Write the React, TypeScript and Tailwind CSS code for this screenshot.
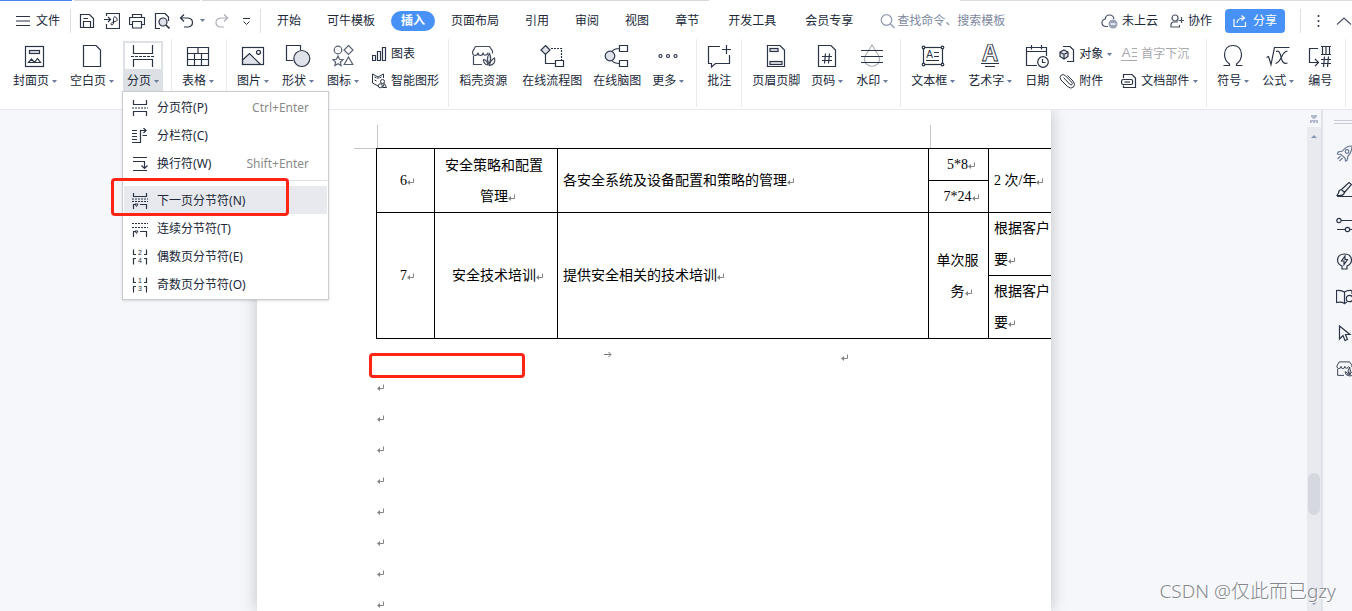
import type { ReactNode } from "react"

const INK = "#2b3346"
const SOFT = "#dfe2e8"

/* ---------- small helpers ---------- */

function Svg({ w = 26, h = 24, color = INK, children }: { w?: number; h?: number; color?: string; children: ReactNode }) {
  return (
    <svg width={w} height={h} viewBox={`0 0 ${w} ${h}`} fill="none" stroke={color} strokeWidth="1.2" className="block shrink-0" aria-hidden="true">
      {children}
    </svg>
  )
}

function Glyph({ x, y, size, color = INK, children }: { x: number; y: number; size: number; color?: string; children: string }) {
  return (
    <text x={x} y={y} fontSize={size} fill={color} stroke="none" textAnchor="middle" className="font-['Liberation_Sans']">
      {children}
    </text>
  )
}

function Caret() {
  return (
    <svg width="5" height="3" viewBox="0 0 5 3" className="block shrink-0" aria-hidden="true">
      <path d="M0 0H5L2.5 3Z" fill="#6b7a9b" />
    </svg>
  )
}

// paragraph mark shown after every editable run
function Mark() {
  return (
    <svg width="8" height="8" viewBox="0 0 8 8" fill="none" stroke="#858585" className="-mr-2 inline-block align-[-1px]" aria-hidden="true">
      <path d="M6.5 0.5V4.5H2" />
      <path d="M0 4.5L3 2V7Z" fill="#858585" stroke="none" />
    </svg>
  )
}

function Docer() {
  return (
    <>
      <path d="M5.5 2.5H19.5L22.5 7V9.5M5.5 2.5L2.5 8Q2.5 11.5 5 11.5Q8 11.5 8 8.5Q8 11.5 10.5 11.5Q13 11.5 13 8.5Q13.5 11.5 15.5 11Q18 10.5 18 8.5M3.5 12V20.5H12" />
      <path d="M18 21Q13.5 20.5 13.5 15.5Q17 16 18 21Z" />
      <path d="M19 20Q15.5 14.5 19.5 9.5Q22 14.5 19 20Z" fill={SOFT} />
      <path d="M19.5 21.5Q20 16.5 24.5 14Q26 20.5 19.5 21.5Z" />
    </>
  )
}

/* ---------- ribbon ---------- */

function Tool({ icon, label, caret, active, className = "" }: { icon: ReactNode; label: string; caret?: boolean; active?: boolean; className?: string }) {
  return (
    <button
      type="button"
      className={`flex shrink-0 flex-col items-center border-2 px-0.5 pt-px whitespace-nowrap ${active ? "border-[#dde1e6] bg-linear-to-b from-white from-[26px] to-[#dde1e6] to-[26px] pb-1" : "border-transparent"} ${className}`}
    >
      {icon}
      <span className="mt-[5px] flex items-center gap-[3px] leading-4">
        {label}
        {caret && <Caret />}
      </span>
    </button>
  )
}

function SmallTool({ icon, label, caret, muted }: { icon: ReactNode; label: string; caret?: boolean; muted?: boolean }) {
  return (
    <button type="button" disabled={muted} className={`flex shrink-0 items-center gap-1 leading-4 whitespace-nowrap ${muted ? "text-[#a9a9ad]" : ""}`}>
      {icon}
      {label}
      {caret && <Caret />}
    </button>
  )
}

function Group({ children, className = "pr-2" }: { children: ReactNode; className?: string }) {
  return <div className={`flex shrink-0 items-start gap-[5px] border-r border-[#eaebee] pt-0.5 pl-1.5 ${className}`}>{children}</div>
}

function Column({ children }: { children: ReactNode }) {
  return <div className="flex flex-col gap-[11px] pt-[5px] pl-1">{children}</div>
}

const pageShape = "M4.5 1.5H17L21.5 6V22.5H4.5Z"

function Ribbon() {
  return (
    <div className="flex h-[68px] items-stretch">
      <Group className="pr-2 pl-[9px]">
        <Tool caret label="封面页" icon={
          <Svg>
            <rect x="3.5" y="2.5" width="18" height="20" />
            <rect x="7.5" y="6.5" width="10" height="3" fill={SOFT} />
            <path d="M6.5 18.5L9.5 15L12.5 18.5ZM12.5 18.5L15.5 14.5L18.5 18.5Z" />
          </Svg>
        } />
        <Tool caret label="空白页" icon={<Svg><path d={pageShape} /></Svg>} />
        <div className="relative">
          <Tool active caret label="分页" icon={
            <Svg>
              <path d="M3.5 1V9.5H22.5V1M3.5 23V15.5H22.5V23" />
              <path d="M1 12.5H25" strokeDasharray="3 1" />
            </Svg>
          } />
          <BreakMenu />
        </div>
      </Group>

      <Group>
        <Tool caret label="表格" icon={
          <Svg><path d="M2.5 3.5H23.5V21.5H2.5ZM2.5 9.5H23.5M2.5 15.5H23.5M13 3.5V9.5M9.5 9.5V21.5M16.5 9.5V21.5" /></Svg>
        } />
      </Group>

      <Group className="pr-0">
        <Tool caret label="图片" icon={
          <Svg>
            <path d="M2.5 16L9.5 9.5L20.5 20.5H2.5Z" fill={SOFT} />
            <rect x="2.5" y="3.5" width="21" height="17" />
            <circle cx="18.5" cy="8.3" r="2" />
          </Svg>
        } />
        <Tool caret label="形状" icon={
          <Svg>
            <path d="M15.5 6V1.5H1.5V16.5H8" />
            <circle cx="16.8" cy="14.5" r="8" fill={SOFT} />
          </Svg>
        } />
        <Tool caret label="图标" icon={
          <Svg color="#596173">
            <circle cx="8" cy="6" r="3.8" />
            <path d="M18.5 1.5L23 6L18.5 10.5L14 6Z" />
            <path d="M8 12L9.5 15.3L13 15.7L10.4 18L11.1 21.5L8 19.7L4.9 21.5L5.6 18L3 15.7L6.5 15.3Z" />
            <path d="M18.5 13L22.8 20.5H14.2Z" />
          </Svg>
        } />
        <Column>
          <SmallTool label="图表" icon={
            <Svg w={15} h={16}>
              <path d="M0.5 9.5H3.5V14.5H0.5ZM5.5 5.5H8.5V14.5H5.5ZM10.5 1.5H13.5V14.5H10.5Z" />
            </Svg>
          } />
          <SmallTool label="智能图形" icon={
            <Svg w={15} h={16}>
              <path d="M6 13L0.5 10V1L6 4L11.5 1V5M2.5 4L4.5 5M2.5 7L4.5 8M7.5 5L9.5 4M6 4V6" strokeWidth="1" />
              <g strokeWidth="1" fill="#fff">
                <circle cx="10.5" cy="8.5" r="2" />
                <circle cx="8.3" cy="12.8" r="2" />
                <path d="M12.3 10.5L14.5 14.5H10.5Z" />
              </g>
            </Svg>
          } />
        </Column>
        <span className="w-1" />
      </Group>

      <Group>
        <Tool label="稻壳资源" className="mr-0.5" icon={<Svg color="#434b5c"><Docer /></Svg>} />
        <Tool label="在线流程图" className="-mr-0.5" icon={
          <Svg>
            <path d="M6.5 1.5L11 6L6.5 10.5L2 6Z" fill={SOFT} />
            <path d="M12 4.5H22.5V16" strokeDasharray="2 1" />
            <path d="M6.5 10.5V19.5H16.5M16.5 16.5H24.5V22.5H16.5Z" />
          </Svg>
        } />
        <Tool label="在线脑图" className="-mr-0.5" icon={
          <Svg>
            <circle cx="6" cy="12" r="4.8" fill={SOFT} />
            <path d="M8 7.5Q10 4.5 15.5 4.5M8 16.5Q10 19.5 15.5 19.5M15.5 1.5H23.5V7.5H15.5ZM15.5 16.5H23.5V22.5H15.5Z" />
          </Svg>
        } />
        <Tool caret label="更多" icon={
          <Svg>
            <circle cx="5.5" cy="12" r="1.5" />
            <circle cx="13" cy="12" r="1.5" />
            <circle cx="20.5" cy="12" r="1.5" />
          </Svg>
        } />
      </Group>

      <Group className="pr-1.5">
        <Tool label="批注" className="-mx-px" icon={<Svg><path d="M14 2.5H2.5V19.5H5.5V23L9.5 19.5H23.5V11M20.5 1V10M16 5.5H25" /></Svg>} />
      </Group>

      <Group>
        <Tool label="页眉页脚" className="-mr-0.5" icon={
          <Svg>
            <path d={pageShape} />
            <rect x="7" y="4.5" width="8" height="3" fill={SOFT} />
            <rect x="7" y="17.5" width="12" height="3" fill={SOFT} />
          </Svg>
        } />
        <Tool caret label="页码" icon={
          <Svg>
            <path d={pageShape} />
            <path d="M8 12.5H18M8 16.5H18M11.5 9.5L10.5 19.5M15.5 9.5L14.5 19.5" />
          </Svg>
        } />
        <Tool caret label="水印" icon={
          <Svg>
            <path d="M13 1L7 10.5Q3.5 17 8 20.5Q13 24 18 20.5Q22.5 17 19 10.5Z" stroke="#adb0b8" />
            <path d="M2 6.5H24M2 12.5H24M2 18.5H24" />
          </Svg>
        } />
      </Group>

      <Group>
        <Tool caret label="文本框" icon={
          <Svg>
            <rect x="3.5" y="3.5" width="19" height="17" />
            <g fill="#fff">
              <circle cx="3.5" cy="3.5" r="1.3" />
              <circle cx="22.5" cy="3.5" r="1.3" />
              <circle cx="3.5" cy="20.5" r="1.3" />
              <circle cx="22.5" cy="20.5" r="1.3" />
            </g>
            <Glyph x={9.5} y={14} size={10}>A</Glyph>
            <path d="M14 8.5H19M14 12.5H19M6 16.5H19" />
          </Svg>
        } />
        <Tool caret label="艺术字" icon={
          <Svg>
            <text x="13" y="17" fontSize="23" textAnchor="middle" strokeWidth="0.9" className="font-['Liberation_Sans'] font-bold">A</text>
            <path d="M4 19.5H22M8 22.5H18" />
          </Svg>
        } />
        <Tool label="日期" className="-mr-1 -ml-px" icon={
          <Svg>
            <path d="M13 21.5H2.5V3.5H22.5V12M2.5 7.5H22.5M7.5 1V5.5M17.5 1V5.5" />
            <circle cx="19" cy="18" r="5.3" />
            <path d="M18.5 15V18.5H21.5" />
          </Svg>
        } />
        <Column>
          <SmallTool caret label="对象" icon={
            <Svg w={16} h={16}>
              <path d="M4 0.5H11L14.5 4V15.5H8" />
              <path d="M5 4L9 6V10.5L5 13L1 10.5V6ZM1.5 6.5L5 8.3L8.5 6.5M5 8.3V12.5" fill={SOFT} />
            </Svg>
          } />
          <SmallTool label="附件" icon={
            <Svg w={16} h={16}>
              <path d="M4.5 4.5L10.5 11Q12 12.5 13 11.5T12.5 9L6.5 2.8Q4 0.5 2 2.3T2 7L8.5 13.5Q12 16.5 14.5 14T14 8L8.5 2.5" strokeWidth="1" />
            </Svg>
          } />
        </Column>
        <Column>
          <SmallTool muted label="首字下沉" icon={
            <Svg w={16} h={16} color="#a9a9ad">
              <Glyph x={5} y={11} size={13} color="#a9a9ad">A</Glyph>
              <path d="M11 2.5H16M11 6.5H16M11 10.5H16M0 14.5H16" />
            </Svg>
          } />
          <SmallTool caret label="文档部件" icon={
            <Svg w={16} h={16}>
              <path d="M2.5 5V1.5H11L14.5 5V14.5H2.5V12.5" />
              <rect x="0.6" y="6.5" width="11" height="5" rx="1.5" fill="#fff" />
              <path d="M3.5 9H9" />
            </Svg>
          } />
        </Column>
      </Group>

      <Group>
        <Tool caret label="符号" icon={
          <Svg>
            <path d="M3.5 21.5H9.5V20Q4.5 16.5 4.5 10.5Q5 1.5 13 1.5T21.5 10.5Q21.5 16.5 16.5 20V21.5H22.5" />
          </Svg>
        } />
        <Tool caret label="公式" icon={
          <Svg>
            <path d="M1.5 13.5L3.5 12.5L6 20.5L9.5 3.5H24.5" />
            <path d="M11 7.5Q14.5 5.5 16 13Q17.5 21 22.5 19M22.5 7Q19 7.5 16.5 13T10.5 19.5" />
          </Svg>
        } />
        <Tool label="编号" icon={
          <Svg>
            <path d="M11 4.5H2.5V18.5H11M8 15L11.5 18.5L8 22" />
            <path d="M14 2.5H24M14 10.5H24M15.5 2.5V10.5M19 2.5V10.5M22.5 2.5V10.5" />
            <path d="M14 15.5H24M14 19.5H24M17.5 12.5L16.5 23M21.5 12.5L20.5 23" />
          </Svg>
        } />
      </Group>
    </div>
  )
}

/* ---------- break menu ---------- */

const tick = "M1.5 16V11.5H4M14.5 16V11.5H8"
const corners = "M1.5 0.5V5.5H4M14.5 0.5V5.5H12M1.5 15.5V9.5H4M14.5 15.5V9.5H12"

const menuItems: { label: string; keys?: string; current?: boolean; icon: ReactNode }[] = [
  { label: "分页符(P)", keys: "Ctrl+Enter", icon: <><path d="M1.5 0V4.5H14.5V0M1.5 16V11.5H14.5V16" /><path d="M0 8H16" strokeDasharray="2 1" /></> },
  { label: "分栏符(C)", icon: <path d="M0 2.5H5M0 5.5H5M0 8.5H5M0 11.5H5M0 14.5H8.5V2.5H14M11.5 0L14 2.5L11.5 5M10.5 7.5H15" /> },
  { label: "换行符(W)", keys: "Shift+Enter", icon: <path d="M1 1.5H15M1 5.5H12.5V12M9.5 9.5L12.5 12.5L15.5 9.5M1 14.5H15" /> },
  { label: "下一页分节符(N)", current: true, icon: <><path d={`M1.5 0V3.5H14.5V0${tick}`} /><path d="M0 6H16M0 8.5H16" strokeDasharray="2 1" strokeWidth="1" /><path d="M3 11H6L4.5 13.5Z" strokeWidth="1" /></> },
  { label: "连续分节符(T)", icon: <><path d="M1.5 16V10.5H4M14.5 16V10.5H8" /><path d="M0 2.5H16M0 6.5H16" strokeDasharray="2 1" /><path d="M3 10H6L4.5 12.5Z" strokeWidth="1" /></> },
  { label: "偶数页分节符(E)", icon: <><path d={corners} /><Glyph x={8} y={6} size={7}>2</Glyph><Glyph x={8} y={14} size={7}>4</Glyph></> },
  { label: "奇数页分节符(O)", icon: <><path d={corners} /><Glyph x={8} y={6} size={7}>1</Glyph><Glyph x={8} y={14} size={7}>3</Glyph></> },
]

function BreakMenu() {
  return (
    <div role="menu" className="absolute top-[50px] -left-px z-10 w-[207px] border border-[#c9ccd1] bg-white p-px shadow-sm">
      {menuItems.map((item) => (
        <div key={item.label} role="none" className={item.current ? "mt-[3px] border-t border-[#dfe0e6] pt-[5px]" : ""}>
          <button type="button" role="menuitem" className={`flex h-7 w-full items-center gap-[9px] pt-px pr-[18px] pl-2 ${item.current ? "bg-[#e7e9ee]" : ""}`}>
            <Svg w={16} h={16}>{item.icon}</Svg>
            <span>{item.label}</span>
            {item.keys && <span className="ml-auto text-[#8a8a8a]">{item.keys}</span>}
          </button>
        </div>
      ))}
      <div className="pointer-events-none absolute top-[86px] -left-3 h-[38px] w-[178px] rounded-sm border-3 border-[#ff2414]" />
    </div>
  )
}

/* ---------- title / tab row ---------- */

const tabs = ["开始", "可牛模板", "插入", "页面布局", "引用", "审阅", "视图", "章节", "开发工具", "会员专享"]

function Divider() {
  return <span className="h-6 w-px shrink-0 bg-[#dddfe4]" />
}

function QuickBar() {
  return (
    <div className="mx-2 flex shrink-0 items-center gap-[9px]">
      <button type="button" aria-label="保存">
        <Svg w={16} h={16}><path d="M1.5 1.5H10.5L14.5 5.5V14.5H1.5ZM4.5 14V8.5H11.5V14M4.5 5.5H9" /></Svg>
      </button>
      <button type="button" aria-label="输出为PDF">
        <Svg w={16} h={16}>
          <path d="M2.5 3V0.5H15.5V15.5H2.5V11M0 6.5H6M4 4L6.5 6.5L4 9" />
          <path d="M8 12Q6.5 12 7 10.5T11 8.5T12.5 5T9.5 5.5V10Q9 12 8 12" strokeWidth="1" />
        </Svg>
      </button>
      <button type="button" aria-label="打印">
        <Svg w={16} h={16}><path d="M3.5 4.5V1.5H12.5V4.5M3.5 11.5H0.5V4.5H15.5V11.5H12.5M3.5 8.5H12.5V15H3.5Z" /></Svg>
      </button>
      <button type="button" aria-label="打印预览">
        <Svg w={16} h={16}>
          <path d="M6 15.5H1.5V0.5H11L14.5 4V8" />
          <circle cx="9" cy="9" r="4" fill={SOFT} />
          <path d="M12 12L15.5 15.5" strokeWidth="1.6" />
        </Svg>
      </button>
      <button type="button" aria-label="撤销" className="flex items-center gap-1.5">
        <Svg w={15} h={16}><path d="M5 1.5L1.5 5L5 8.5M1.5 5H9Q13.5 5.5 13.5 9.5T9 14H5" /></Svg>
        <Caret />
      </button>
      <button type="button" aria-label="恢复" disabled>
        <Svg w={16} h={16} color="#a9adb6"><path d="M10 1.5L13.5 5L10 8.5M13.5 5H7Q2 5.5 2 9.5T6.5 14H10" /></Svg>
      </button>
      <button type="button" aria-label="自定义快速访问工具栏" className="mr-px ml-[3px]">
        <Svg w={9} h={16}><path d="M1 5.5H8M1.5 8.5L4.5 11.5L7.5 8.5" strokeWidth="1" /></Svg>
      </button>
    </div>
  )
}

function TabRow() {
  return (
    <div className="flex h-[38px] items-center pt-px pl-4 whitespace-nowrap">
      <button type="button" className="mr-2.5 flex shrink-0 items-center gap-1.5">
        <Svg w={14} h={12}><path d="M0 1.5H14M0 6H14M0 10.5H14" /></Svg>
        文件
      </button>
      <Divider />
      <QuickBar />
      <Divider />
      <nav className="ml-[3px] flex shrink-0 items-center">
        {tabs.map((tab, i) => (
          <a
            key={tab}
            href="#"
            className={tab === "插入" ? "mx-[3px] rounded-full bg-[#4791f7] px-2.5 leading-5 font-bold text-white" : i > 7 ? "pr-[13px] pl-4 leading-5" : "px-[13px] leading-5"}
          >
            {tab}
          </a>
        ))}
      </nav>
      <label className="ml-3.5 flex items-center gap-0.5">
        <Svg w={15} h={16} color="#8f98ad"><circle cx="6.5" cy="7" r="5.3" /><path d="M10.5 11L14.5 15" /></Svg>
        <input type="search" aria-label="查找命令、搜索模板" placeholder="查找命令、搜索模板" className="w-[120px] bg-transparent leading-5 outline-none placeholder:text-[#7d88a1]" />
      </label>
      <div className="ml-auto flex shrink-0 items-center">
        <button type="button" className="flex items-center gap-1">
          <Svg w={17} h={16} color="#4c5568">
            <path d="M7 13.5H4.5Q1 13 1 9.8T4.3 6Q4.5 2 8.5 2T12.8 6" />
            <circle cx="12" cy="11" r="4.5" fill="#9aa3b7" stroke="none" />
            <path d="M9.5 11H14.5" stroke="#fff" strokeWidth="1.4" />
          </Svg>
          未上云
        </button>
        <button type="button" className="ml-3 flex items-center gap-1">
          <Svg w={14} h={16} color="#4c5568"><circle cx="5" cy="5" r="3" /><path d="M8 9H4Q1 9 1 12V14H9.5V12M11.5 4V10M8.5 7.5H14" /></Svg>
          协作
        </button>
        <button type="button" className="mr-[15px] ml-[13px] flex h-6 items-center gap-1.5 rounded bg-[#4791f7] px-2 text-white">
          <Svg w={14} h={14} color="#fff"><path d="M1 5V12.5H12.5V8M4 9Q4.5 4 11 4M8.5 1.5L11.5 4L8.5 6.5" /></Svg>
          分享
        </button>
        <Divider />
        <button type="button" aria-label="更多选项" className="mx-4">
          <svg width="3" height="14" viewBox="0 0 3 14" fill={INK} className="block"><circle cx="1.5" cy="2" r="1" /><circle cx="1.5" cy="7" r="1" /><circle cx="1.5" cy="12" r="1" /></svg>
        </button>
        <button type="button" aria-label="折叠功能区">
          <Svg w={16} h={8} color="#4c5568"><path d="M1 7.5L8 1L15 7.5" /></Svg>
        </button>
      </div>
    </div>
  )
}

/* ---------- document ---------- */

function DocTable() {
  return (
    <table className="w-[713px] table-fixed border-collapse text-center [&_td]:border [&_td]:border-black [&_td]:p-0">
      <colgroup>
        <col className="w-[58px]" />
        <col className="w-[123px]" />
        <col className="w-[371px]" />
        <col className="w-[60px]" />
        <col />
      </colgroup>
      <tbody>
        <tr className="h-8">
          <td rowSpan={2}><p className="pr-1">6<Mark /></p></td>
          <td rowSpan={2}><p className="pr-3 pl-2">安全策略和配置<br />管理<Mark /></p></td>
          <td rowSpan={2}><p className="pl-[5px] text-left">各安全系统及设备配置和策略的管理<Mark /></p></td>
          <td><p className="pr-0.5">5*8<Mark /></p></td>
          <td rowSpan={2}><p className="pl-[5px] text-left">2 次/年<Mark /></p></td>
        </tr>
        <tr className="h-8">
          <td><p className="pr-0.5">7*24<Mark /></p></td>
        </tr>
        <tr className="h-[63px]">
          <td rowSpan={2}><p className="pr-1">7<Mark /></p></td>
          <td rowSpan={2}><p className="pr-1">安全技术培训<Mark /></p></td>
          <td rowSpan={2}><p className="pl-[5px] text-left">提供安全相关的技术培训<Mark /></p></td>
          <td rowSpan={2}><p className="pr-0.5">单次服<br />务<Mark /></p></td>
          <td><p className="pl-[5px] text-left">根据客户<br />要<Mark /></p></td>
        </tr>
        <tr className="h-[63px]">
          <td><p className="pl-[5px] text-left">根据客户<br />要<Mark /></p></td>
        </tr>
      </tbody>
    </table>
  )
}

function Page() {
  return (
    <article className="relative w-[794px] shrink-0 overflow-hidden bg-white pt-[38px] pl-[119px] font-['Liberation_Serif','Noto_Sans_CJK_SC',serif] text-sm leading-[31px] text-black">
      {/* crop marks of the text area */}
      <span className="absolute top-[15px] left-[120px] h-[23px] w-px bg-[#c6c6c6]" />
      <span className="absolute top-[38px] left-[97px] h-px w-[22px] bg-[#c6c6c6]" />
      <span className="absolute top-[15px] left-[673px] h-[23px] w-px bg-[#c6c6c6]" />
      <DocTable />
      <div className="relative mt-0.5">
        <span className="absolute top-3 -left-[7px] h-[25px] w-[156px] rounded-sm border-3 border-[#ff2414]" />
        <p className="flex h-[31px] items-center pl-[228px]">
          <svg width="8" height="7" viewBox="0 0 8 7" fill="none" stroke="#777" className="mb-1"><path d="M0 3.5H7M4.5 1L7 3.5L4.5 6" /></svg>
          <span className="ml-[229px] leading-none"><Mark /></span>
        </p>
        {Array.from({ length: 8 }, (_, i) => (
          <p key={i} className="flex h-[31px] items-center pl-px"><Mark /></p>
        ))}
      </div>
    </article>
  )
}

function ScrollBar() {
  return (
    <div className="flex w-3.5 shrink-0 flex-col">
      <svg width="14" height="17" viewBox="0 0 14 17" fill="#b3bacb" className="block"><path d="M4 5H10V7L7.5 9H6.5L4 7ZM3 10H11V13H9V11.5H8V13H6V11.5H5V13H3Z" /></svg>
      <div className="flex flex-1 flex-col items-center bg-[#e9eaf0] pt-2 pb-1.5">
        <svg width="6" height="3" viewBox="0 0 6 3" fill="#8795b5"><path d="M0 3L3 0L6 3Z" /></svg>
        <div className="flex-[335] basis-0" />
        <div className="h-[42px] w-3 rounded-full bg-[#d6d8e0]" />
        <div className="flex-[87] basis-0" />
        <svg width="6" height="3" viewBox="0 0 6 3" fill="#8795b5"><path d="M0 0H6L3 3Z" /></svg>
      </div>
    </div>
  )
}

const sideTools: { name: string; color?: string; icon: ReactNode }[] = [
  { name: "快捷", color: "#6a7896", icon: <><path d="M16 1Q10 1 6.5 6L2 7L1.5 9L5 9.5L9 13L9.5 16L11 15.5L12 11Q16 7 16 1Z" /><circle cx="11" cy="6.5" r="1.8" /><path d="M4.5 11L1.5 14M6.5 13L3.5 16" /></> },
  { name: "样式", icon: <path d="M5.5 8.5L13 1.5L15.5 3.5L8.5 11.5ZM5.5 8.5Q2.5 9 2.5 12L1 14.5Q7.5 15.5 8.5 11.5M1 15.5H16" /> },
  { name: "设置", icon: <><circle cx="3" cy="3.5" r="2.2" /><path d="M5 3.5H17M1 12.5H9M13.5 12.5H17" /><circle cx="11.5" cy="12.5" r="2.2" /></> },
  { name: "智能", icon: <path d="M6 13Q1.5 11 1.5 7Q2 1 8.5 1T15.5 7Q15.5 11 11 13V16H6ZM9 3L5.5 8H8V11.5L11.5 6.5H9Z" /> },
  { name: "查阅", icon: <><path d="M8.5 3Q5.5 1 0.5 1.5V13.5Q5.5 12.5 8.5 14.5V3Q11.5 1 16 1.5V5M8.5 14.5L11 13" /><circle cx="13.5" cy="9.5" r="3.2" /></> },
  { name: "选择", icon: <path d="M3.5 1V14L7 10.5L9 15.5L11.5 14.5L9.5 9.5H14Z" /> },
  { name: "稻壳", icon: <g transform="translate(-1 -1) scale(.75)"><Docer /></g> },
]

function SideBar() {
  return (
    <aside className="flex w-[31px] shrink-0 flex-col items-end overflow-hidden border-l-2 border-[#e0e2ea]">
      <span className="mt-2.5 h-1 w-[18px] shrink-0 border-y border-[#c9ccd4]" />
      <div className="mt-[11px] flex w-4 flex-col">
        {sideTools.map((tool) => (
          <button key={tool.name} type="button" aria-label={tool.name} className="flex h-9 items-center">
            <Svg w={17} h={17} color={tool.color}>{tool.icon}</Svg>
          </button>
        ))}
      </div>
    </aside>
  )
}

export default function App() {
  return (
    <div className="relative flex h-screen flex-col overflow-hidden bg-[#f5f7fa] font-['Noto_Sans','Noto_Sans_CJK_SC',sans-serif] text-xs text-[#20283a]">
      <header className="relative z-10 shrink-0 border-b border-[#e8e9ec] bg-white pb-0.5">
        <div className="flex h-px gap-0.5">
          <span className="w-[72px] bg-[#4c82f7]" />
          <span className="w-[126px] bg-[#d8d9de]" />
          <span className="w-[507px] bg-[#d8d9de]" />
          <span className="ml-auto w-[29%] bg-[#dcdde2]" />
        </div>
        <TabRow />
        <Ribbon />
      </header>
      <main className="flex min-h-0 flex-1">
        <div className="flex flex-1 justify-center overflow-hidden pl-px">
          <div className="flex shadow-[0_0_16px_rgba(0,0,0,0.22)]">
            <Page />
          </div>
        </div>
        <ScrollBar />
        <SideBar />
      </main>
      <div className="pointer-events-none absolute right-4 bottom-1.5 text-[19px] leading-7 font-light text-[#85878c] [text-shadow:1px_1px_0_#fff]">CSDN @仅此而已gzy</div>
    </div>
  )
}
